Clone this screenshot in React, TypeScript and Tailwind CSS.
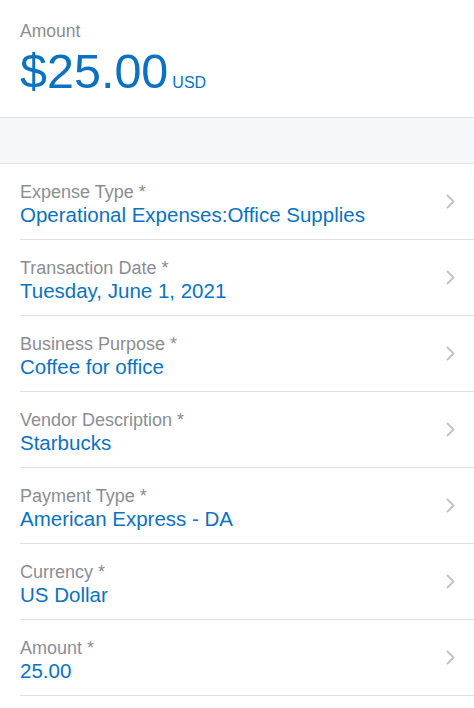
import React from 'react';

const rows = [
  { label: 'Expense Type *', value: 'Operational Expenses:Office Supplies' },
  { label: 'Transaction Date *', value: 'Tuesday, June 1, 2021' },
  { label: 'Business Purpose *', value: 'Coffee for office' },
  { label: 'Vendor Description *', value: 'Starbucks' },
  { label: 'Payment Type *', value: 'American Express - DA' },
  { label: 'Currency *', value: 'US Dollar' },
  { label: 'Amount *', value: '25.00' },
];

const Chevron: React.FC = () => (
  <svg width="9" height="15" viewBox="0 0 9 15" fill="none" className="shrink-0">
    <path d="M1.5 1.5l6 6-6 6" stroke="#c3c5c8" strokeWidth={2} strokeLinecap="round" strokeLinejoin="round" />
  </svg>
);

const App: React.FC = () => {
  return (
    <div className="w-[474px] h-[708px] overflow-hidden bg-white font-['Liberation_Sans',Arial,sans-serif]">
      <div className="pl-5 pt-[20px] h-[117px]">
        <p className="text-[17.5px] leading-[22px] text-[#8a8e93]">Amount</p>
        <div className="flex items-baseline mt-[4px]">
          <span className="text-[48.5px] leading-[50px] text-[#0b72c3]">$25.00</span>
          <span className="ml-[4px] text-[16px] text-[#0b72c3]">USD</span>
        </div>
      </div>
      <div className="h-[47px] bg-[#f5f8fb] border-y border-[#e2e4e7]"></div>
      <div>
        {rows.map((r) => (
          <div key={r.label} className="pl-5">
            <div className="h-[75px] flex items-center pr-[19px]">
              <div className="flex-1 pt-[4px]">
                <p className="text-[18px] leading-[22px] text-[#8a8e93]">{r.label}</p>
                <p className="text-[20.5px] leading-[23px] text-[#0b72c3]">{r.value}</p>
              </div>
              <Chevron />
            </div>
            <div className="h-px bg-[#dfe1e4]"></div>
          </div>
        ))}
      </div>
    </div>
  );
};

export default App;
